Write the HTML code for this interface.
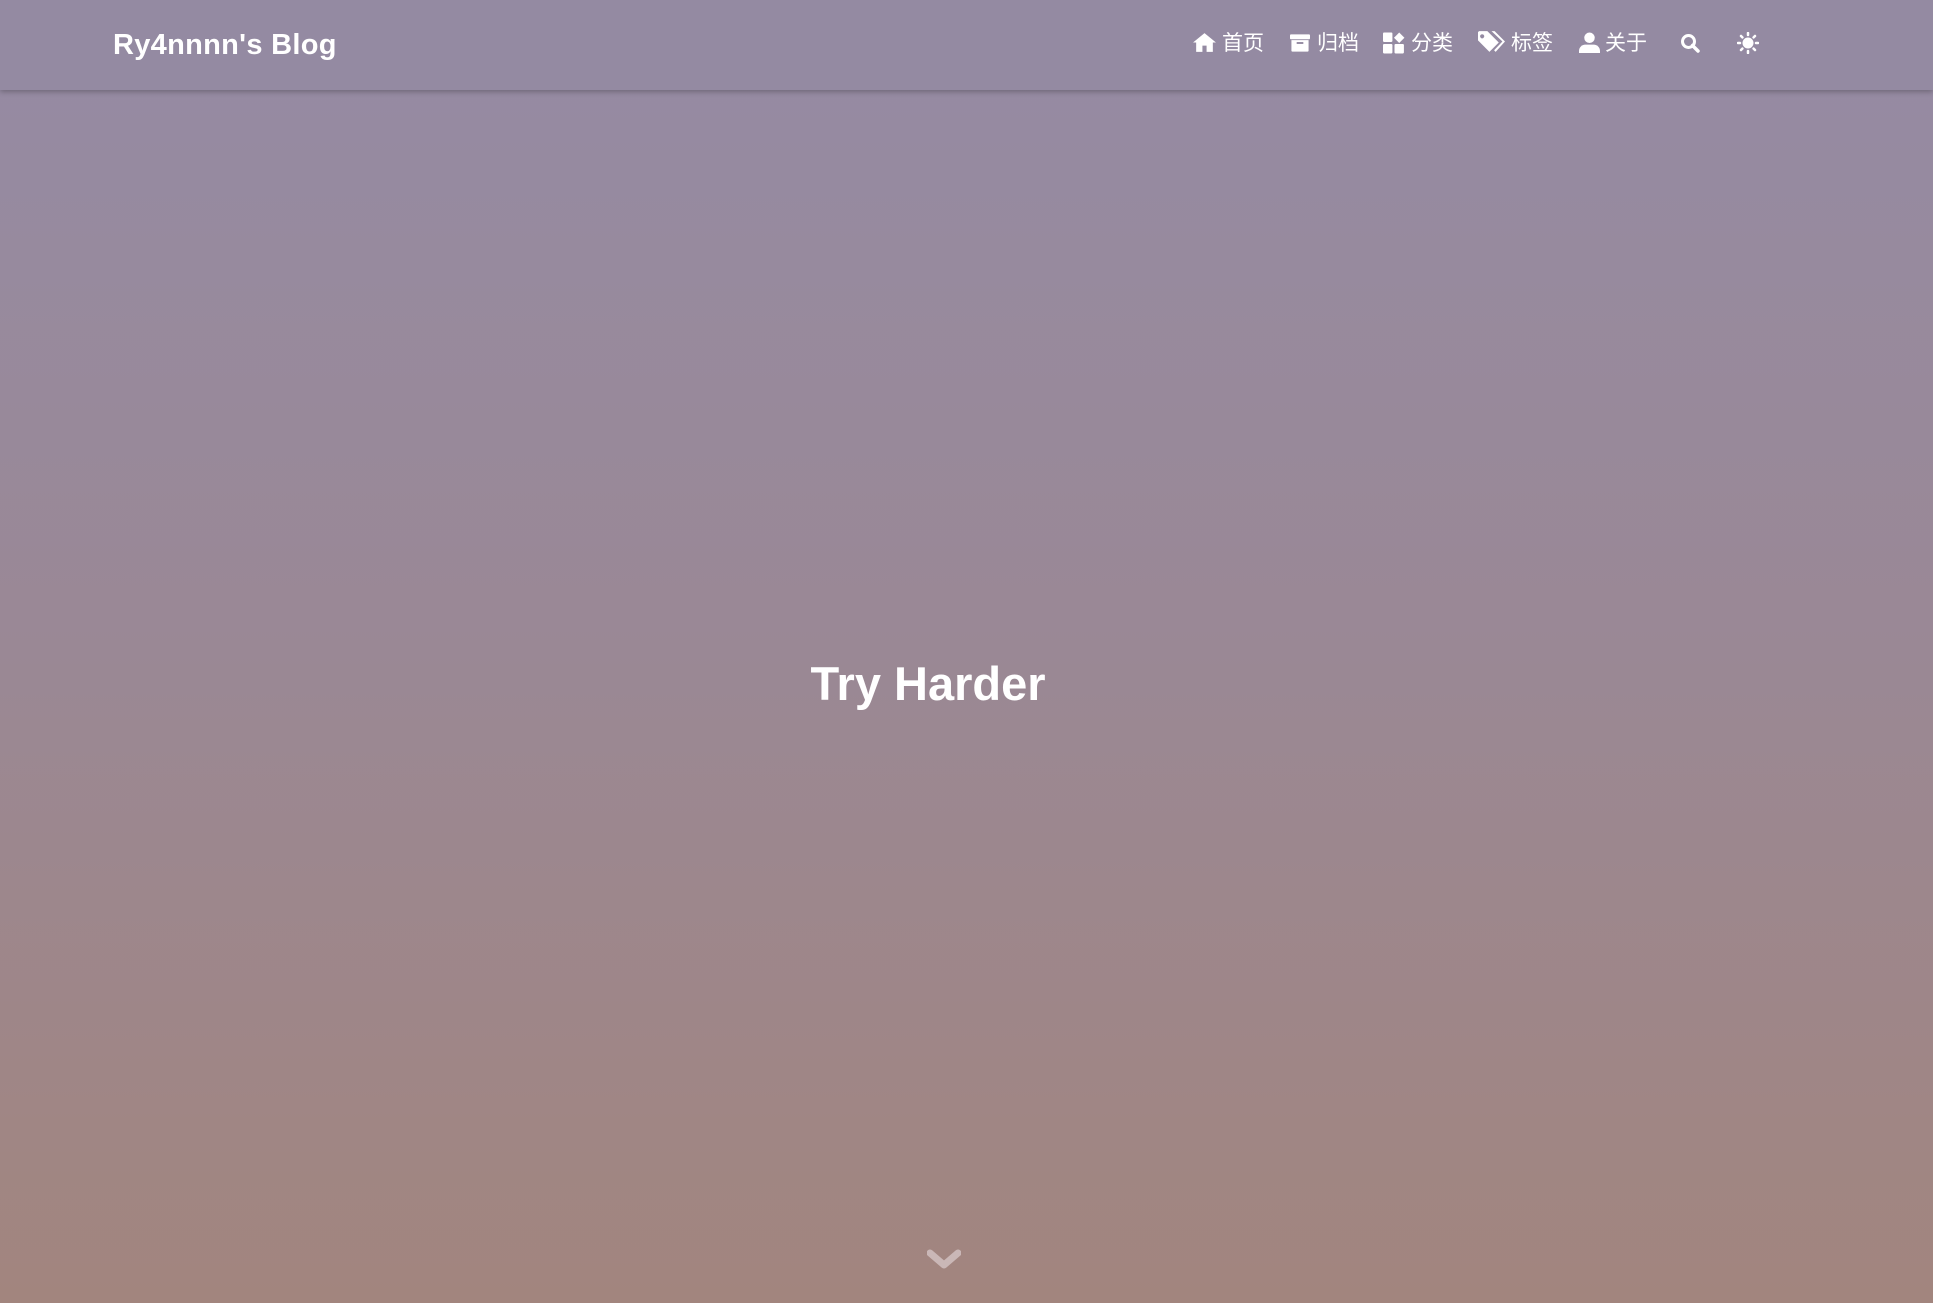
<!DOCTYPE html>
<html><head><meta charset="utf-8"><style>
html,body{margin:0;padding:0;width:1933px;height:1303px;overflow:hidden}
body{background:linear-gradient(to bottom,#958ba4 0%,#9a8895 50%,#a2857e 100%);font-family:"Liberation Sans","Noto Sans CJK SC",sans-serif;color:#fff;position:relative}
.nav{position:absolute;left:0;top:0;width:1933px;height:90px;background:#948aa2;box-shadow:0 2px 5px rgba(0,0,0,.25)}
.brand{position:absolute;left:113px;top:29px;font-size:29px;font-weight:bold;letter-spacing:0.3px}
.t{position:absolute;top:30px;font-size:21px;line-height:28px}
.i{position:absolute;fill:#fff}
h1{position:absolute;left:0;width:1856px;text-align:center;top:656px;margin:0;font-size:47px;font-weight:bold}
.chev{position:absolute;left:927px;top:1248px;opacity:.6}
</style></head><body>
<div class="nav">
<div class="brand">Ry4nnnn's Blog</div>
<svg class="i" style="left:1192px;top:32px" width="25" height="21" viewBox="0 0 24 20"><path d="M12 1L1 10h3v9h6v-6h4v6h6v-9h3z"/></svg><div class="t" style="left:1222px">首页</div>
<svg class="i" style="left:1290px;top:33px" width="20" height="20" viewBox="0 0 21 20"><rect x="0" y="1" width="21" height="5" rx="1"/><path d="M1.5 7h18v11a1 1 0 0 1-1 1h-16a1 1 0 0 1-1-1z"/><rect x="7" y="9" width="7" height="2" fill="#948aa2"/></svg><div class="t" style="left:1317px">归档</div>
<svg class="i" style="left:1383px;top:32px" width="23" height="22" viewBox="0 0 22 20"><rect x="0" y="0" width="9" height="9" rx="1"/><rect x="0" y="11" width="9" height="9" rx="1"/><rect x="11" y="11" width="9" height="9" rx="1"/><path d="M15.5 0l5 5-5 5-5-5z"/></svg><div class="t" style="left:1411px">分类</div>
<svg class="i" style="left:1478px;top:31px" width="27" height="23" viewBox="0 0 26 22"><path fill-rule="evenodd" d="M0 1v8l11 11 9-9L9 0H1z M4 3a2 2 0 1 0 .01 0z"/><path d="M13 0h3l10 10-9 10-1.5-1.5 8-8.5z"/></svg><div class="t" style="left:1511px">标签</div>
<svg class="i" style="left:1579px;top:32px" width="21" height="21" viewBox="0 0 20 20"><circle cx="10" cy="5.5" r="5"/><path d="M0 20v-2a6 6 0 0 1 6-6h8a6 6 0 0 1 6 6v2z"/></svg><div class="t" style="left:1605px">关于</div>
<svg class="i" style="left:1680px;top:33px" width="20" height="20" viewBox="0 0 20 20"><circle cx="8.5" cy="8.5" r="6" fill="none" stroke="#fff" stroke-width="3"/><path d="M12.5 12.5l5.5 5.5" stroke="#fff" stroke-width="3.5" stroke-linecap="round"/></svg>
<svg class="i" style="left:1737px;top:32px" width="22" height="22" viewBox="0 0 22 22"><circle cx="11" cy="11" r="5.5"/><g stroke="#fff" stroke-width="2.5" stroke-linecap="round"><path d="M11 1v2M11 19v2M1 11h2M19 11h2M4 4l1.4 1.4M16.6 16.6L18 18M4 18l1.4-1.4M16.6 5.4L18 4"/></g></svg>
</div>
<h1>Try Harder</h1>
<svg class="chev" width="34" height="22" viewBox="0 0 34 22"><path d="M3 5l14 12 14-12" fill="none" stroke="#e6d9dc" stroke-width="7" stroke-linejoin="round" stroke-linecap="round"/></svg>
</body></html>
